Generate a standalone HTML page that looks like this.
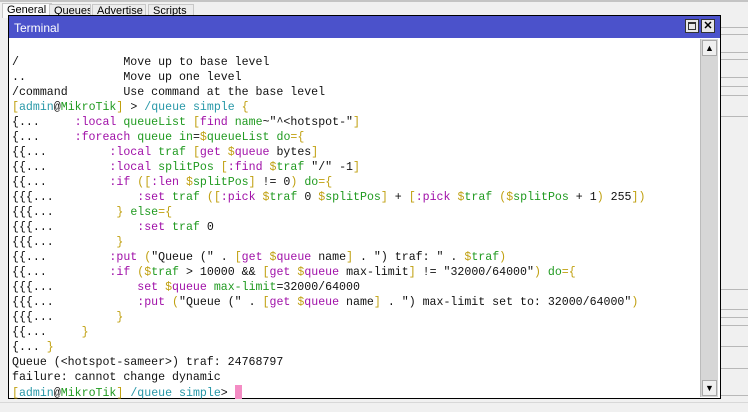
<!DOCTYPE html>
<html><head><meta charset="utf-8"><style>
body{margin:0;width:748px;height:412px;background:#f0f0f0;position:relative;overflow:hidden;font-family:"Liberation Sans",sans-serif}
.top{position:absolute;left:0;top:0;width:748px;height:2px;background:#c4c4c4}
.tab{position:absolute;top:4px;height:14px;border:1px solid #c8c8c8;border-bottom:none;background:#ececec;font-size:11px;color:#000;padding-left:4px;overflow:hidden}
.rl{position:absolute;left:720px;width:28px;height:1px;background:#b8b8b8}
.win{position:absolute;left:8px;top:15px;width:711px;height:382px;border:1px solid #000;background:#fff}
.title{position:absolute;left:0;top:0;width:711px;height:22px;background:#4b52cb;color:#fff;font-size:12px;line-height:24px;padding-left:5px;box-sizing:border-box}
.btn{position:absolute;top:3px;width:14px;height:14px;background:#e8e8e8;border:1px solid #333;box-sizing:border-box}
.sb{position:absolute;left:691px;top:23px;width:17px;height:358px;background:#d6d6d6;border-left:1px solid #bbb}
.sbb{position:absolute;left:1px;width:15px;height:16px;background:#f0f0f0;border:1px solid #aaa;box-sizing:border-box;font-size:9px;text-align:center;line-height:14px}
pre{position:absolute;left:3px;top:39px;margin:0;font-family:"Liberation Mono",monospace;font-size:11.6px;line-height:15px;color:#111}
.p{color:#a010a8}.g{color:#209a20}.y{color:#c0a010}.t{color:#2898a8}
.cur{display:inline-block;width:7px;height:14px;background:#f48cc4;vertical-align:-3px}
</style></head><body>
<div class="top"></div>
<div class="tab" style="left:2px;width:44px;top:3px;background:#fafafa">General</div>
<div class="tab" style="left:49px;width:36px">Queues</div>
<div class="tab" style="left:92px;width:48px">Advertise</div>
<div class="tab" style="left:148px;width:40px">Scripts</div>
<div class="rl" style="top:27px"></div><div class="rl" style="top:34px"></div>
<div class="rl" style="top:52px"></div><div class="rl" style="top:59px"></div>
<div class="rl" style="top:77px"></div><div class="rl" style="top:86px"></div>
<div class="rl" style="top:95px"></div><div class="rl" style="top:116px"></div>
<div class="rl" style="top:289px"></div><div class="rl" style="top:309px"></div>
<div class="rl" style="top:317px"></div><div class="rl" style="top:325px"></div>
<div class="rl" style="top:346px"></div><div class="rl" style="top:368px"></div>
<div class="rl" style="top:395px"></div>
<div class="rl" style="left:0;width:748px;top:402px;background:#d8d8d8"></div>
<div class="win">
<div class="title">Terminal</div>
<div class="btn" style="left:676px"><div style="position:absolute;left:2px;top:2px;width:8px;height:8px;border:1px solid #333;border-top-width:2px;box-sizing:border-box"></div></div>
<div class="btn" style="left:692px;font-size:11px;line-height:12px;text-align:center;font-weight:bold">✕</div>
<div class="sb"><div class="sbb" style="top:1px">▲</div><div class="sbb" style="top:341px">▼</div></div>
<pre>/               Move up to base level
..              Move up one level
/command        Use command at the base level
<span class="y">[</span><span class="t">admin</span>@<span class="g">MikroTik</span><span class="y">]</span> &gt; <span class="t">/queue simple</span> <span class="y">{</span>
{...     <span class="p">:local</span> <span class="g">queueList</span> <span class="y">[</span><span class="p">find</span> <span class="g">name</span>~"^&lt;hotspot-"<span class="y">]</span>
{...     <span class="p">:foreach</span> <span class="g">queue</span> <span class="g">in</span>=<span class="y">$</span><span class="g">queueList</span> <span class="g">do</span><span class="y">={</span>
{{...         <span class="p">:local</span> <span class="g">traf</span> <span class="y">[</span><span class="p">get</span> <span class="y">$</span><span class="p">queue</span> bytes<span class="y">]</span>
{{...         <span class="p">:local</span> <span class="g">splitPos</span> <span class="y">[</span><span class="p">:find</span> <span class="y">$</span><span class="g">traf</span> "/" -1<span class="y">]</span>
{{...         <span class="p">:if</span> <span class="y">([</span><span class="p">:len</span> <span class="y">$</span><span class="g">splitPos</span><span class="y">]</span> != 0<span class="y">)</span> <span class="g">do</span><span class="y">={</span>
{{{...            <span class="p">:set</span> <span class="g">traf</span> <span class="y">([</span><span class="p">:pick</span> <span class="y">$</span><span class="g">traf</span> 0 <span class="y">$</span><span class="g">splitPos</span><span class="y">]</span> + <span class="y">[</span><span class="p">:pick</span> <span class="y">$</span><span class="g">traf</span> <span class="y">(</span><span class="y">$</span><span class="g">splitPos</span> + 1<span class="y">)</span> 255<span class="y">])</span>
{{{...         <span class="y">}</span> <span class="g">else</span><span class="y">={</span>
{{{...            <span class="p">:set</span> <span class="g">traf</span> 0
{{{...         <span class="y">}</span>
{{...         <span class="p">:put</span> <span class="y">(</span>"Queue (" . <span class="y">[</span><span class="p">get</span> <span class="y">$</span><span class="p">queue</span> name<span class="y">]</span> . ") traf: " . <span class="y">$</span><span class="g">traf</span><span class="y">)</span>
{{...         <span class="p">:if</span> <span class="y">(</span><span class="y">$</span><span class="g">traf</span> &gt; 10000 &amp;&amp; <span class="y">[</span><span class="p">get</span> <span class="y">$</span><span class="p">queue</span> max-limit<span class="y">]</span> != "32000/64000"<span class="y">)</span> <span class="g">do</span><span class="y">={</span>
{{{...            <span class="p">set</span> <span class="y">$</span><span class="p">queue</span> <span class="g">max-limit</span>=32000/64000
{{{...            <span class="p">:put</span> <span class="y">(</span>"Queue (" . <span class="y">[</span><span class="p">get</span> <span class="y">$</span><span class="p">queue</span> name<span class="y">]</span> . ") max-limit set to: 32000/64000"<span class="y">)</span>
{{{...         <span class="y">}</span>
{{...     <span class="y">}</span>
{... <span class="y">}</span>
Queue (&lt;hotspot-sameer&gt;) traf: 24768797
failure: cannot change dynamic
<span class="y">[</span><span class="t">admin</span>@<span class="g">MikroTik</span><span class="y">]</span> <span class="t">/queue simple</span>&gt; <span class="cur"></span></pre>
</div>
</body></html>
